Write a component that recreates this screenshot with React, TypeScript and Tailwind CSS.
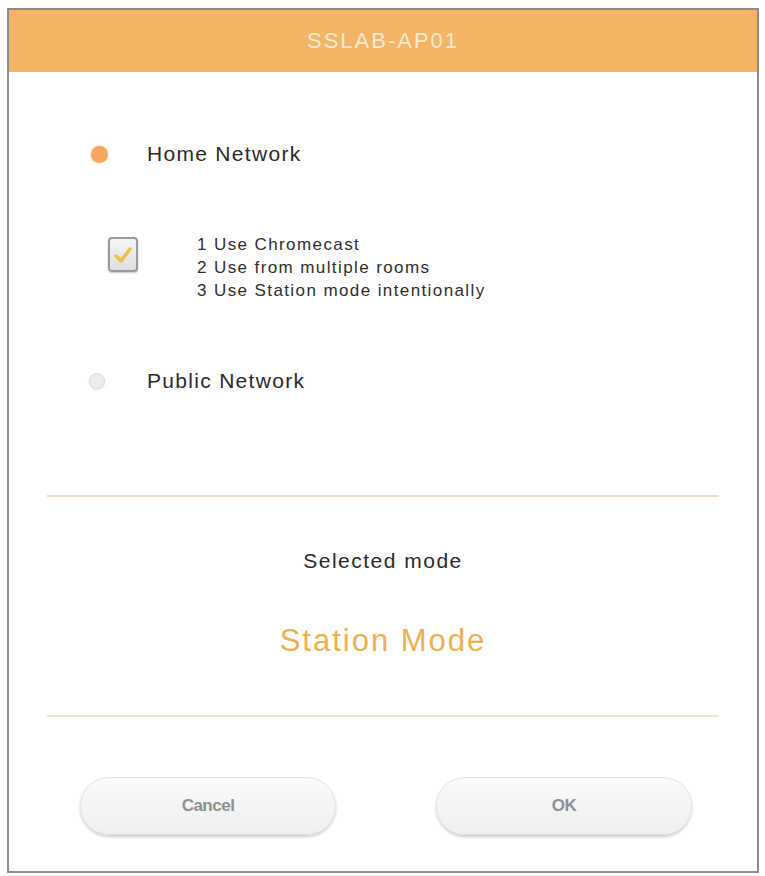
import React from "react";

export default function App() {
  return (
    <div className="w-[765px] h-[876px] bg-white pt-[8px] pl-[7px] pr-[6px] pb-[3px]" style={{ fontFamily: '"Liberation Sans", Arial, sans-serif' }}>
      <div className="h-full border-2 border-[#8c8c8c] flex flex-col">
        <div className="h-[62px] bg-[#f3b466] flex items-center justify-center text-[22px] leading-[24px] text-[#fbe9cf] tracking-[2px]">
          SSLAB-AP01
        </div>
        <div className="flex flex-col pl-[82px] pt-[70px]">
          <div className="flex items-center h-[24px]">
            <div className="w-[17px] h-[17px] rounded-full bg-[#f5a75d] shadow-[0_0_3px_rgba(245,167,93,0.6)]" />
            <span className="ml-[39px] text-[21px] leading-[24px] tracking-[1.3px] text-[#2a2a2a]">Home Network</span>
          </div>
          <div className="flex items-start mt-[67px] pl-[17px]">
            <div className="w-[30px] h-[35px] mt-[4px] rounded-[4px] border-2 border-[#9a9a9a] bg-gradient-to-b from-[#f6f6f6] to-[#dedede] flex items-center justify-center shadow-[0_1px_2px_rgba(0,0,0,0.25)]">
              <svg width="20" height="18" viewBox="0 0 20 18">
                <path d="M3 10 L8 15 L17 3" fill="none" stroke="#ebc04c" strokeWidth="3.5" strokeLinecap="round" strokeLinejoin="round" />
              </svg>
            </div>
            <div className="ml-[59px] flex flex-col text-[17px] leading-[23px] tracking-[1.4px] text-[#2e2e2e]">
              <span>1 Use Chromecast</span>
              <span>2 Use from multiple rooms</span>
              <span>3 Use Station mode intentionally</span>
            </div>
          </div>
          <div className="flex items-center h-[24px] mt-[67px]">
            <div className="w-[16px] h-[16px] -ml-[2px] rounded-full bg-[#ececec] border border-[#dcdcdc] shadow-[0_1px_2px_rgba(0,0,0,0.1)]" />
            <span className="ml-[42px] text-[21px] leading-[24px] tracking-[1.3px] text-[#2a2a2a]">Public Network</span>
          </div>
        </div>
        <div className="mx-[38px] mt-[102px] h-[2px] bg-[#e9dfc8]" />
        <div className="flex flex-col items-center">
          <span className="mt-[52px] text-[21px] leading-[24px] tracking-[1.5px] text-[#2a2a2a]">Selected mode</span>
          <span className="mt-[51px] text-[31px] leading-[34px] tracking-[2px] text-[#efb04f]">Station Mode</span>
        </div>
        <div className="mx-[38px] mt-[57px] h-[2px] bg-[#ece6d6]" />
        <div className="flex justify-between pl-[71px] pr-[65px] mt-[60px]">
          <button className="w-[256px] h-[58px] rounded-full bg-gradient-to-b from-[#fafafa] to-[#efefef] border border-[#e2e2e2] shadow-[0_2px_3px_rgba(0,0,0,0.2)] text-[17px] font-bold text-[#8f8f8f] tracking-[-0.5px]">Cancel</button>
          <button className="w-[256px] h-[58px] rounded-full bg-gradient-to-b from-[#fafafa] to-[#efefef] border border-[#e2e2e2] shadow-[0_2px_3px_rgba(0,0,0,0.2)] text-[17px] font-bold text-[#8f8f8f] tracking-[-0.5px]">OK</button>
        </div>
      </div>
    </div>
  );
}
